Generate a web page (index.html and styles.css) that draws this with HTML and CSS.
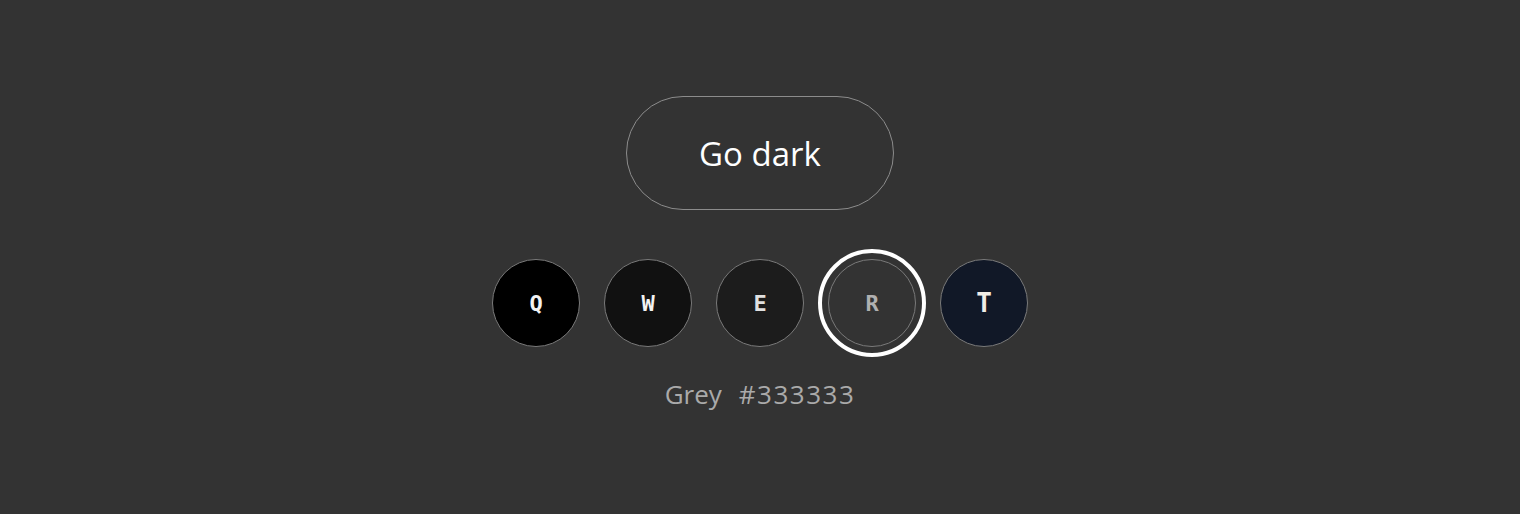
FILE: index.html
```html
<!DOCTYPE html>
<html>
<head>
<meta charset="utf-8">
<link rel="stylesheet" href="styles.css">
</head>
<body>
<main class="page">
  <button class="toggle">Go dark</button>
  <div class="swatches">
    <div class="swatch s-black">Q</div>
    <div class="swatch s-near">W</div>
    <div class="swatch s-dim">E</div>
    <div class="swatch s-grey selected">R</div>
    <div class="swatch s-navy big">T</div>
  </div>
  <p class="caption"><span class="name">Grey</span><span class="hex">#333333</span></p>
</main>
</body>
</html>
```
FILE: styles.css
```css
html, body {
  margin: 0;
  padding: 0;
  background: #333333;
  height: 100%;
}
.page {
  display: flex;
  flex-direction: column;
  align-items: center;
  padding-top: 96px;
  font-family: "Open Sans", "Noto Sans", sans-serif;
}
.toggle {
  width: 268px;
  height: 114px;
  border: 1px solid #8c8c8c;
  border-radius: 57px;
  background: transparent;
  color: #ffffff;
  font-family: "Open Sans", "Noto Sans", sans-serif;
  font-size: 33px;
  padding: 0;
  cursor: pointer;
}
.swatches {
  display: flex;
  gap: 24px;
  margin-top: 49px;
}
.swatch {
  box-sizing: border-box;
  width: 88px;
  height: 88px;
  border-radius: 50%;
  border: 1px solid #7a7a7a;
  display: flex;
  align-items: center;
  justify-content: center;
  font-family: "DejaVu Sans Mono", monospace;
  font-weight: bold;
  font-size: 22px;
  color: #f2f2f2;
}
.s-black { background: #000000; }
.s-near { background: #111111; }
.s-dim { background: #1c1c1c; color: #e0e0e0; }
.s-grey { background: #333333; color: #b0b0b0; }
.s-navy { background: #111827; color: #f0ece6; }
.big { font-size: 26px; }
.selected {
  outline: 4px solid #ffffff;
  outline-offset: 6px;
}
.caption {
  margin: 29px 0 0;
  color: #aaaaaa;
  font-size: 26px;
  display: flex;
  gap: 17px;
}
.hex {
  letter-spacing: 1.5px;
}
```
